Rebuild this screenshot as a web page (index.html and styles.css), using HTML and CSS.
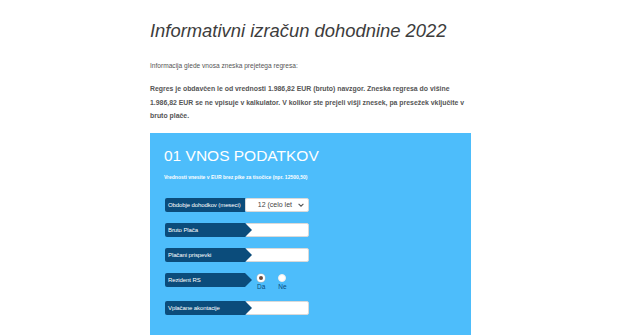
FILE: index.html
```html
<!DOCTYPE html>
<html lang="sl">
<head>
  <meta charset="UTF-8">
  <meta name="viewport" content="width=device-width, initial-scale=1.0">
  <title>Informativni izračun dohodnine 2022</title>
  <link rel="stylesheet" href="styles.css">
</head>
<body>
  <div class="page">
    <h1 class="title">Informativni izračun dohodnine 2022</h1>
    <p class="info">Informacija glede vnosa zneska prejetega regresa:</p>
    <p class="note">Regres je obdavčen le od vrednosti 1.986,82 EUR (bruto) navzgor. Zneska regresa do višine 1.986,82 EUR se ne vpisuje v kalkulator. V kolikor ste prejeli višji znesek, pa presežek vključite v bruto plače.</p>

    <div class="calc">
      <h2 class="calc-title">01 VNOS PODATKOV</h2>
      <p class="calc-hint">Vrednosti vnesite v EUR brez pike za tisočice (npr. 12500,50)</p>

      <div class="rows">
        <div class="row">
          <div class="label">Obdobje dohodkov (meseci)</div>
          <div class="select">
            <span>12 (celo let</span>
            <svg viewBox="0 0 10 6" width="6" height="4"><path d="M1 1L5 5L9 1" fill="none" stroke="#555" stroke-width="1.8"/></svg>
          </div>
        </div>
        <div class="row">
          <div class="label arrow">Bruto Plača</div>
          <div class="input"></div>
        </div>
        <div class="row">
          <div class="label arrow">Plačani prispevki</div>
          <div class="input"></div>
        </div>
        <div class="row">
          <div class="label arrow">Rezident RS</div>
          <div class="radios">
            <div class="radio">
              <span class="dot checked"></span>
              <span class="radio-text">Da</span>
            </div>
            <div class="radio">
              <span class="dot"></span>
              <span class="radio-text">Ne</span>
            </div>
          </div>
        </div>
        <div class="row">
          <div class="label arrow">Vplačane akontacije</div>
          <div class="input"></div>
        </div>
      </div>
    </div>
  </div>
</body>
</html>
```

FILE: styles.css
```css
body {
  margin: 0;
  font-family: "Liberation Sans", Arial, sans-serif;
  background-color: #fff;
  color: #444;
}

.page {
  width: 340px;
  margin: 0 auto;
  padding-top: 20px;
}

.title {
  margin: 0;
  font-size: 18.4px;
  font-weight: normal;
  font-style: italic;
  color: #3d3d3d;
}

.info {
  margin: 20px 0 0;
  font-size: 6.6px;
  color: #555;
}

.note {
  margin: 13px 0 0;
  width: 324px;
  font-size: 6.9px;
  line-height: 13.5px;
  font-weight: bold;
  color: #555;
}

.calc {
  width: 321px;
  margin-top: 10px;
  padding: 14px 14px 30px;
  box-sizing: border-box;
  background-color: #4dbdfb;
  color: #fff;
}

.calc-title {
  margin: 0;
  font-size: 15.5px;
  font-weight: normal;
}

.calc-hint {
  margin: 9px 0 0;
  font-size: 5px;
  font-weight: bold;
}

.rows {
  display: flex;
  flex-direction: column;
  gap: 11px;
  margin-top: 18px;
  padding-left: 1px;
}

.row {
  display: flex;
  align-items: flex-start;
}

.label {
  position: relative;
  width: 80px;
  height: 14px;
  line-height: 14px;
  padding-left: 3px;
  box-sizing: border-box;
  background-color: #0b4c7b;
  border-radius: 2px 0 0 2px;
  font-size: 6px;
  letter-spacing: -0.1px;
  color: #fff;
  white-space: nowrap;
}

.label.arrow::after {
  content: "";
  position: absolute;
  top: 0;
  right: -7px;
  border-top: 7px solid transparent;
  border-bottom: 7px solid transparent;
  border-left: 7px solid #0b4c7b;
  z-index: 1;
}

.input,
.select {
  width: 64px;
  height: 14px;
  box-sizing: border-box;
  background-color: #fff;
  border: 1px solid #d9d9d9;
  border-radius: 2px;
}

.select {
  display: flex;
  align-items: center;
  justify-content: flex-end;
  gap: 6px;
  padding-right: 4px;
  font-size: 7px;
  color: #444;
}

.radios {
  display: flex;
  gap: 13px;
  margin-left: 12px;
  padding-top: 1px;
}

.radio {
  display: flex;
  flex-direction: column;
  align-items: center;
}

.dot {
  width: 8px;
  height: 8px;
  box-sizing: border-box;
  border-radius: 50%;
  background-color: #fff;
  border: 1px solid #eee;
}

.dot.checked {
  border: 2px solid #fff;
  background-color: #6b4a3e;
  box-shadow: 0 0 0 0.5px #bbb;
}

.radio-text {
  margin-top: 1px;
  font-size: 6.5px;
  color: #0b4c7b;
}
```
